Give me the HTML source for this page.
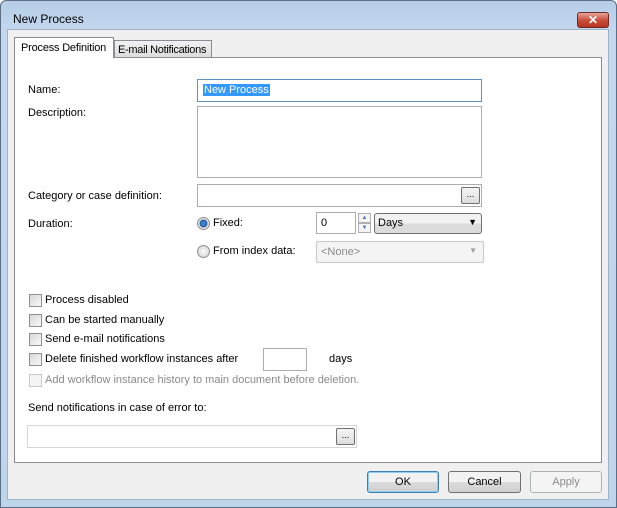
<!DOCTYPE html>
<html><head><style>
*{box-sizing:border-box;margin:0;padding:0}
body{width:617px;height:508px;overflow:hidden;font-family:"Liberation Sans",sans-serif;font-size:11px;color:#000;background:#fff;white-space:nowrap}
.win{position:absolute;left:0;top:0;width:617px;height:508px;border:1px solid #5a6f86;border-radius:6px 6px 0 0;background:linear-gradient(#b7cde6,#c3d8ef 30px,#bfd5ec);}
.title{position:absolute;left:12px;top:11px;font-size:12px;color:#000}
.close{position:absolute;left:576px;top:11px;width:32px;height:16px;border:1px solid #6b2a28;border-radius:3px;background:linear-gradient(#e8a59a,#c9503c 50%,#b8341f);color:#fff;font-weight:bold;text-align:center;font-size:12px;line-height:14px}
.client{position:absolute;left:7px;top:29px;width:602px;height:471px;background:#f0f0f0;border:1px solid #9fb3c8}
.a{position:absolute}
.panel{position:absolute;left:14px;top:57px;width:588px;height:406px;background:#fff;border:1px solid #898c95}
.tab1{position:absolute;left:14px;top:37px;width:100px;height:21px;background:#fff;border:1px solid #898c95;border-bottom:none;z-index:2;padding:4px 0 0 6px;letter-spacing:-0.2px}
.tab2{position:absolute;left:114px;top:40px;width:98px;height:18px;background:linear-gradient(#f2f2f2,#dcdcdc);border:1px solid #898c95;padding:3px 0 0 3px;letter-spacing:-0.3px;overflow:hidden}
.tb{position:absolute;background:#fff;border:1px solid #abadb3}
.dots{position:absolute;width:19px;height:17px;border:1px solid #707070;border-radius:2px;background:linear-gradient(#f5f5f5,#dddddd);text-align:center;font-size:9px;line-height:12px}
.cb{position:absolute;width:13px;height:13px;border:1px solid #8e8f8f;background:linear-gradient(135deg,#d8d8d8,#f8f8f8)}
.btn{position:absolute;top:471px;height:22px;border:1px solid #707070;border-radius:3px;background:linear-gradient(#f2f2f2 50%,#dcdcdc 50%,#cfcfcf);text-align:center;line-height:20px;font-size:11px}
.radio{position:absolute;width:13px;height:13px;border-radius:50%;border:1px solid #8e8f8f;background:radial-gradient(#fafafa,#d0d0d0)}
</style></head><body>
<div class="win">
<div class="title">New Process</div>
<div class="close">✕</div>
</div>
<div class="client"></div>
<div class="panel"></div>
<div class="tab2">E-mail Notifications</div>
<div class="tab1">Process Definition</div>

<div class="a" style="left:28px;top:84px">Name:</div>
<div class="tb" style="left:197px;top:79px;width:285px;height:23px;border-color:#5c93bc"><span style="position:absolute;left:5px;top:4px;background:#3399ff;color:#fff;padding:0 1px">New Process</span></div>
<div class="a" style="left:28px;top:107px">Description:</div>
<div class="tb" style="left:197px;top:106px;width:285px;height:72px"></div>
<div class="a" style="left:28px;top:190px">Category or case definition:</div>
<div class="tb" style="left:197px;top:184px;width:285px;height:23px"></div>
<div class="dots" style="left:461px;top:187px">...</div>
<div class="a" style="left:28px;top:218px">Duration:</div>
<div class="radio" style="left:197px;top:217px;background:radial-gradient(#3a7fd0 30%,#1b4f8f 45%,#e0e0e0 55%)"></div>
<div class="a" style="left:213px;top:217px">Fixed:</div>
<div class="tb" style="left:316px;top:212px;width:40px;height:22px"><span style="position:absolute;left:4px;top:4px">0</span></div>
<div class="a" style="left:358px;top:213px;width:13px;height:10px;border:1px solid #b0b0b0;background:#f4f4f4;font-size:6px;color:#4a7ab8;text-align:center;line-height:8px">▲</div>
<div class="a" style="left:358px;top:223px;width:13px;height:10px;border:1px solid #b0b0b0;background:#f4f4f4;font-size:6px;color:#4a7ab8;text-align:center;line-height:8px">▼</div>
<div class="a" style="left:374px;top:213px;width:108px;height:21px;border:1px solid #707070;border-radius:3px;background:linear-gradient(#f2f2f2 50%,#dcdcdc 50%);padding:3px 0 0 3px">Days<span style="position:absolute;right:4px;top:3px;font-size:9px">▼</span></div>
<div class="radio" style="left:197px;top:245px"></div>
<div class="a" style="left:213px;top:245px">From index data:</div>
<div class="a" style="left:316px;top:241px;width:168px;height:22px;border:1px solid #c8c8c8;border-radius:2px;background:#f4f4f4;color:#8a8a8a;padding:4px 0 0 4px">&lt;None&gt;<span style="position:absolute;right:6px;top:4px;font-size:8px;color:#a0a0a0">▼</span></div>

<div class="cb" style="left:29px;top:294px"></div><div class="a" style="left:45px;top:294px">Process disabled</div>
<div class="cb" style="left:29px;top:314px"></div><div class="a" style="left:45px;top:314px">Can be started manually</div>
<div class="cb" style="left:29px;top:333px"></div><div class="a" style="left:45px;top:333px">Send e-mail notifications</div>
<div class="cb" style="left:29px;top:353px"></div><div class="a" style="left:45px;top:353px">Delete finished workflow instances after</div>
<div class="tb" style="left:263px;top:348px;width:44px;height:23px"></div>
<div class="a" style="left:329px;top:353px">days</div>
<div class="cb" style="left:29px;top:374px;border-color:#c8c8c8;background:#f4f4f4"></div><div class="a" style="left:45px;top:374px;color:#8a8a8a">Add workflow instance history to main document before deletion.</div>
<div class="a" style="left:28px;top:402px">Send notifications in case of error to:</div>
<div class="tb" style="left:27px;top:425px;width:330px;height:23px;border-color:#d6d6d6"></div>
<div class="dots" style="left:336px;top:428px">...</div>

<div class="btn" style="left:367px;width:72px;border-color:#3c7fb1;box-shadow:inset 0 0 0 1px #8fd0f2">OK</div>
<div class="btn" style="left:448px;width:73px">Cancel</div>
<div class="btn" style="left:530px;width:72px;border-color:#adb2b5;background:#f4f4f4;color:#8a8a8a">Apply</div>
</body></html>
